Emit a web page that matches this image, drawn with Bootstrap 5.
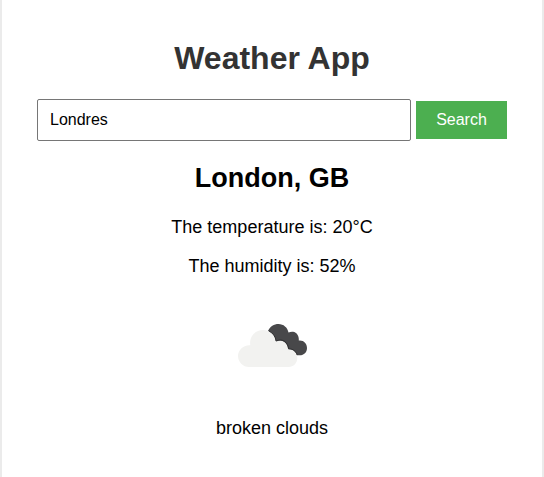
<!DOCTYPE html>
<html lang="en">
<head>
<meta charset="utf-8">
<meta name="viewport" content="width=device-width, initial-scale=1">
<title>Weather App</title>
<link href="https://cdn.jsdelivr.net/npm/bootstrap@5.3.0/dist/css/bootstrap.min.css" rel="stylesheet">
<style>
body { font-family: "Liberation Sans", Arial, sans-serif; font-size: 18px; line-height: 21px; color: #000; background: #ebebeb; }
.weather-panel { width: 540px; height: 477px; padding: 40px 35px 0; }
.app-title { font-size: 32px; line-height: 37px; color: #333; margin-bottom: 22px; }
.search-row { gap: 5px; height: 42px; }
.search-row .form-control { font-family: inherit; font-size: 16px; line-height: 20px; height: 42px; padding: 10px 12px; color: #000; border: 1px solid #767676; border-radius: 2px; }
.search-row .btn { font-family: inherit; font-size: 16px; line-height: 18px; width: 91px; height: 38px; padding: 10px 0; color: #fff; background: #4caf50; }
.place-name { font-size: 27px; line-height: 31px; margin: 22px 0 23px; }
.reading { margin-bottom: 18px; }
.sky-icon { width: 100px; height: 100px; margin: 0 auto 23px; }
</style>
</head>
<body>
<main class="weather-panel bg-white mx-auto text-center">
  <h1 class="app-title fw-bold">Weather App</h1>
  <form class="search-row d-flex align-items-center" onsubmit="return false">
    <input type="text" class="form-control" value="Londres" aria-label="City">
    <button type="submit" class="btn rounded-0 border-0 flex-shrink-0">Search</button>
  </form>
  <h2 class="place-name fw-bold">London, GB</h2>
  <p class="reading">The temperature is: 20°C</p>
  <p class="reading">The humidity is: 52%</p>
  <svg class="sky-icon d-block" viewBox="222 295 100 100" aria-hidden="true">
    <path fill="#48484a" d="M268 331C270 326.500 274 324 278.500 324C283.500 324 287.500 327.500 288.500 332.500C290 331.800 291.500 331.500 293 331.700C296.800 332.200 299.300 336 298.800 340.600C303.500 340 307 343.500 307 348C307 352.200 304 355.300 299.800 355.300H296L276 346Z"/>
    <path fill="#f2f2f0" d="M249 367C243 367 238 362 238 356C238 350 243.500 344.600 250.300 345.200C249 337 255 330 263 330C270 330 275.500 334.500 276 341.500C282 338.500 287.500 342.500 288.200 349.300C293.500 348.500 297.300 353 297.300 358C297.300 363 293.500 367 288.500 367Z"/>
    <path fill="none" stroke="#303032" stroke-width="1" d="M268.700 330.800C273 333 275.500 336.500 276.100 341.100M276.800 340.800C282.500 338.300 287.800 342 288.700 348.800M289.300 348.900C293 348.800 296 351.500 297.200 354.800"/>
  </svg>
  <p class="mb-0">broken clouds</p>
</main>
<script src="https://cdn.jsdelivr.net/npm/bootstrap@5.3.0/dist/js/bootstrap.bundle.min.js"></script>
</body>
</html>
